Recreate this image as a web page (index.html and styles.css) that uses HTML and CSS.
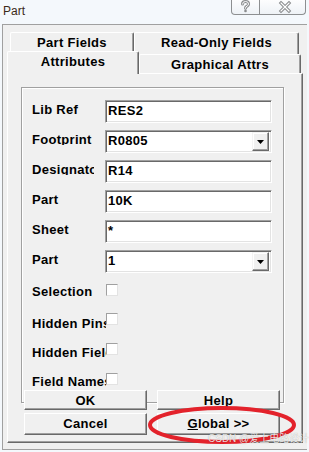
FILE: index.html
```html
<!DOCTYPE html>
<html>
<head>
<meta charset="utf-8">
<link rel="stylesheet" href="styles.css">
</head>
<body>
<div class="win">
  <div class="titlebar">
    <span class="title">Part</span>
    <div class="capbtns">
      <span class="cb cb-help">
        <svg width="27" height="14" viewBox="0 0 27 14">
          <g fill="none" stroke-linecap="round" stroke-linejoin="round">
            <path d="M10.5 4 Q10.5 1.5 13.5 1.5 Q16.5 1.5 16.5 4 Q16.5 5.6 14 6.8 L13.5 8.3" stroke="#8a8c8e" stroke-width="3"/>
            <path d="M10.5 4 Q10.5 1.5 13.5 1.5 Q16.5 1.5 16.5 4 Q16.5 5.6 14 6.8 L13.5 8.3" stroke="#ffffff" stroke-width="1"/>
            <circle cx="13.5" cy="11" r="1.3" fill="#8a8c8e" stroke="none"/>
          </g>
        </svg>
      </span>
      <span class="cb cb-close">
        <svg width="45" height="14" viewBox="0 0 45 14">
          <g fill="none" stroke-linecap="square">
            <path d="M21 3 L29 11 M29 3 L21 11" stroke="#8a8c8e" stroke-width="3.2"/>
            <path d="M21 3 L29 11 M29 3 L21 11" stroke="#ffffff" stroke-width="1.2"/>
          </g>
        </svg>
      </span>
    </div>
  </div>

  <div class="client">
    <div class="tabrow tabrow-back">
      <div class="tab tab-pf">Part Fields</div>
      <div class="tab tab-ro">Read-Only Fields</div>
    </div>
    <div class="tabrow tabrow-front">
      <div class="tab tab-active">Attributes</div>
      <div class="tab tab-ga">Graphical Attrs</div>
    </div>
    <div class="panel">
      <div class="group">
        <div class="field">
          <span class="lbl">Lib Ref</span>
          <div class="edit">RES2</div>
        </div>
        <div class="field">
          <span class="lbl">Footprint</span>
          <div class="edit combo"><span class="val">R0805</span><span class="drop"><svg width="7" height="4" viewBox="0 0 7 4"><polygon points="0,0 7,0 3.5,4" fill="#000"/></svg></span></div>
        </div>
        <div class="field">
          <span class="lbl">Designator</span>
          <div class="edit">R14</div>
        </div>
        <div class="field">
          <span class="lbl">Part</span>
          <div class="edit">10K</div>
        </div>
        <div class="field">
          <span class="lbl">Sheet</span>
          <div class="edit">*</div>
        </div>
        <div class="field">
          <span class="lbl">Part</span>
          <div class="edit combo"><span class="val">1</span><span class="drop"><svg width="7" height="4" viewBox="0 0 7 4"><polygon points="0,0 7,0 3.5,4" fill="#000"/></svg></span></div>
        </div>
        <div class="chkrow chk-sel">
          <span class="lbl2">Selection</span>
          <span class="chk"></span>
        </div>
        <div class="chkrow chk-pins">
          <span class="lbl2">Hidden Pins</span>
          <span class="chk"></span>
        </div>
        <div class="chkrow chk-fields">
          <span class="lbl2">Hidden Fields</span>
          <span class="chk"></span>
        </div>
        <div class="chkrow chk-name">
          <span class="lbl2">Field Names</span>
          <span class="chk"></span>
        </div>
      </div>
      <div class="buttons">
        <div class="btn btn-sm">OK</div>
        <div class="btn btn-sm">Help</div>
        <div class="btn btn-lg">Cancel</div>
        <div class="btn btn-lg"><span class="ul">G</span>lobal &gt;&gt;</div>
      </div>
    </div>
  </div>

  <svg class="mark" width="309" height="452" viewBox="0 0 309 452">
    <ellipse cx="222" cy="425" rx="72" ry="17" fill="none" stroke="#e3222b" stroke-width="4"/>
  </svg>
  <div class="watermark">CSDN @爱上电路设计</div>
</div>
</body>
</html>
```

FILE: styles.css
```css
* { box-sizing: border-box; }
html, body { margin: 0; padding: 0; }
body {
  width: 309px;
  height: 452px;
  overflow: hidden;
  background: #f4f8fc;
  font-family: "Liberation Sans", Arial, sans-serif;
}
.win {
  position: relative;
  width: 309px;
  height: 452px;
}

/* title bar */
.titlebar {
  height: 24px;
  display: flex;
  align-items: flex-start;
}
.title {
  margin: 4px 0 0 3px;
  font-size: 12px;
  line-height: 14px;
  color: #3b2a18;
}
.capbtns {
  margin-left: auto;
  margin-right: 3px;
  width: 75px;
  height: 15px;
  display: flex;
  border: 1px solid #8d8f91;
  border-top: none;
  border-radius: 0 0 4px 4px;
  background: linear-gradient(#fdfdfe, #eef2f6);
}
.cb { display: block; height: 14px; }
.cb-help { flex: 0 0 28px; border-right: 1px solid #8d8f91; }
.cb-close { flex: 1; }
.cb svg { display: block; }

/* dialog client area */
.client {
  margin-left: 2px;
  width: 305px;
  height: 426px;
  border: 1px solid #a0a0a0;
  border-right: none;
  background: #f0f0f0;
  padding: 7px 0 0 4px;
  font-weight: bold;
  font-size: 13px;
  letter-spacing: 0.3px;
  color: #000;
}

/* tabs */
.tabrow { display: flex; }
.tabrow-back { height: 22px; padding-left: 3px; }
.tabrow-front {
  position: relative;
  height: 22px;
  margin-top: -3px;
  align-items: flex-end;
}
.tab {
  background: #f0f0f0;
  border-top: 1px solid #fff;
  border-left: 1px solid #fff;
  border-right: 1px solid #696969;
  box-shadow: inset -1px 0 0 #a0a0a0;
  border-radius: 2px 2px 0 0;
  text-align: center;
  line-height: 13px;
  padding-top: 2.5px;
  white-space: nowrap;
}
.tab-pf { width: 124px; height: 22px; }
.tab-ro { width: 165px; height: 22px; }
.tab-active { width: 132px; height: 23px; margin-bottom: -1px; }
.tab-ga { width: 162px; height: 19px; }

/* tab panel */
.panel {
  width: 296px;
  height: 370px;
  border-top: 1px solid #fff;
  border-left: 1px solid #fff;
  border-right: 1px solid #696969;
  border-bottom: 1px solid #696969;
  box-shadow: inset -1px -1px 0 #a0a0a0;
  padding: 13px 0 0 0;
}
.group {
  margin-left: 13px;
  width: 263px;
  height: 316px;
  border: 1px solid #a0a0a0;
  box-shadow: inset 1px 1px 0 #fff, 1px 1px 0 #fff;
  padding: 12px 0 0 10px;
}
.field {
  display: flex;
  align-items: flex-start;
  height: 23px;
  margin-bottom: 7px;
}
.lbl {
  flex: 0 0 62px;
  margin-right: 11px;
  margin-top: 5px;
  height: 10px;
  line-height: 10px;
  overflow: hidden;
  white-space: nowrap;
}
.edit {
  width: 167px;
  height: 23px;
  background: #fff;
  border-top: 1px solid #a0a0a0;
  border-left: 1px solid #a0a0a0;
  border-right: 1px solid #fff;
  border-bottom: 1px solid #fff;
  box-shadow: inset 1px 1px 0 #696969, inset -1px -1px 0 #e3e3e3;
  padding: 2.5px 0 0 2px;
  line-height: 13px;
  white-space: nowrap;
}
.combo {
  display: flex;
  padding: 1px 2px 0 2px;
}
.combo .val { flex: 1; padding-top: 1.5px; }
.drop {
  width: 17px;
  height: 19px;
  background: #f0f0f0;
  border-top: 1px solid #f4f4f4;
  border-left: 1px solid #f4f4f4;
  border-right: 1px solid #696969;
  border-bottom: 1px solid #696969;
  box-shadow: inset -1px -1px 0 #a0a0a0, inset 1px 1px 0 #fff;
  display: flex;
  align-items: center;
  justify-content: center;
  padding-right: 1px;
}
.drop svg { display: block; }

/* checkbox rows */
.chkrow {
  display: flex;
  align-items: flex-start;
  margin-top: 11px;
}
.chkrow + .chkrow { margin-top: 0; }
.chk-sel { height: 29px; }
.chk-pins, .chk-fields { height: 30px; }
.chk-name { height: 14px; }
.lbl2 {
  flex: 0 0 74px;
  height: 10px;
  line-height: 10px;
  overflow: hidden;
  white-space: nowrap;
}
.chk-sel .lbl2 { margin-top: 3px; }
.chk-pins .lbl2 { margin-top: 6px; }
.chk-fields .lbl2 { margin-top: 5px; }
.chk-name .lbl2 { margin-top: 4px; }
.chk {
  display: block;
  width: 12px;
  height: 12px;
  background: #fff;
  border-top: 1px solid #a0a0a0;
  border-left: 1px solid #a0a0a0;
  border-right: 1px solid #e3e3e3;
  border-bottom: 1px solid #e3e3e3;
}

/* buttons */
.buttons {
  position: relative;
  margin-top: -13px;
  padding-left: 16px;
  display: grid;
  grid-template-columns: 123px 123px;
  grid-template-rows: 20px 22px;
  column-gap: 10px;
  row-gap: 3px;
}
.btn {
  background: #f0f0f0;
  border-top: 1px solid #fff;
  border-left: 1px solid #fff;
  border-right: 1px solid #696969;
  border-bottom: 1px solid #696969;
  box-shadow: inset -1px -1px 0 #a0a0a0;
  text-align: center;
  line-height: 13px;
  padding-top: 2.5px;
  white-space: nowrap;
}
.ul { text-decoration: underline; }

/* annotation overlays */
.mark {
  position: absolute;
  left: 0;
  top: 0;
  pointer-events: none;
}
.watermark {
  position: absolute;
  left: 208px;
  top: 432px;
  font-family: "Liberation Sans", "Noto Sans CJK SC", sans-serif;
  font-size: 10px;
  line-height: 13px;
  color: rgba(255, 255, 255, 0.85);
  text-shadow: 0 0 1px rgba(0, 0, 0, 0.35);
  white-space: nowrap;
}
```
